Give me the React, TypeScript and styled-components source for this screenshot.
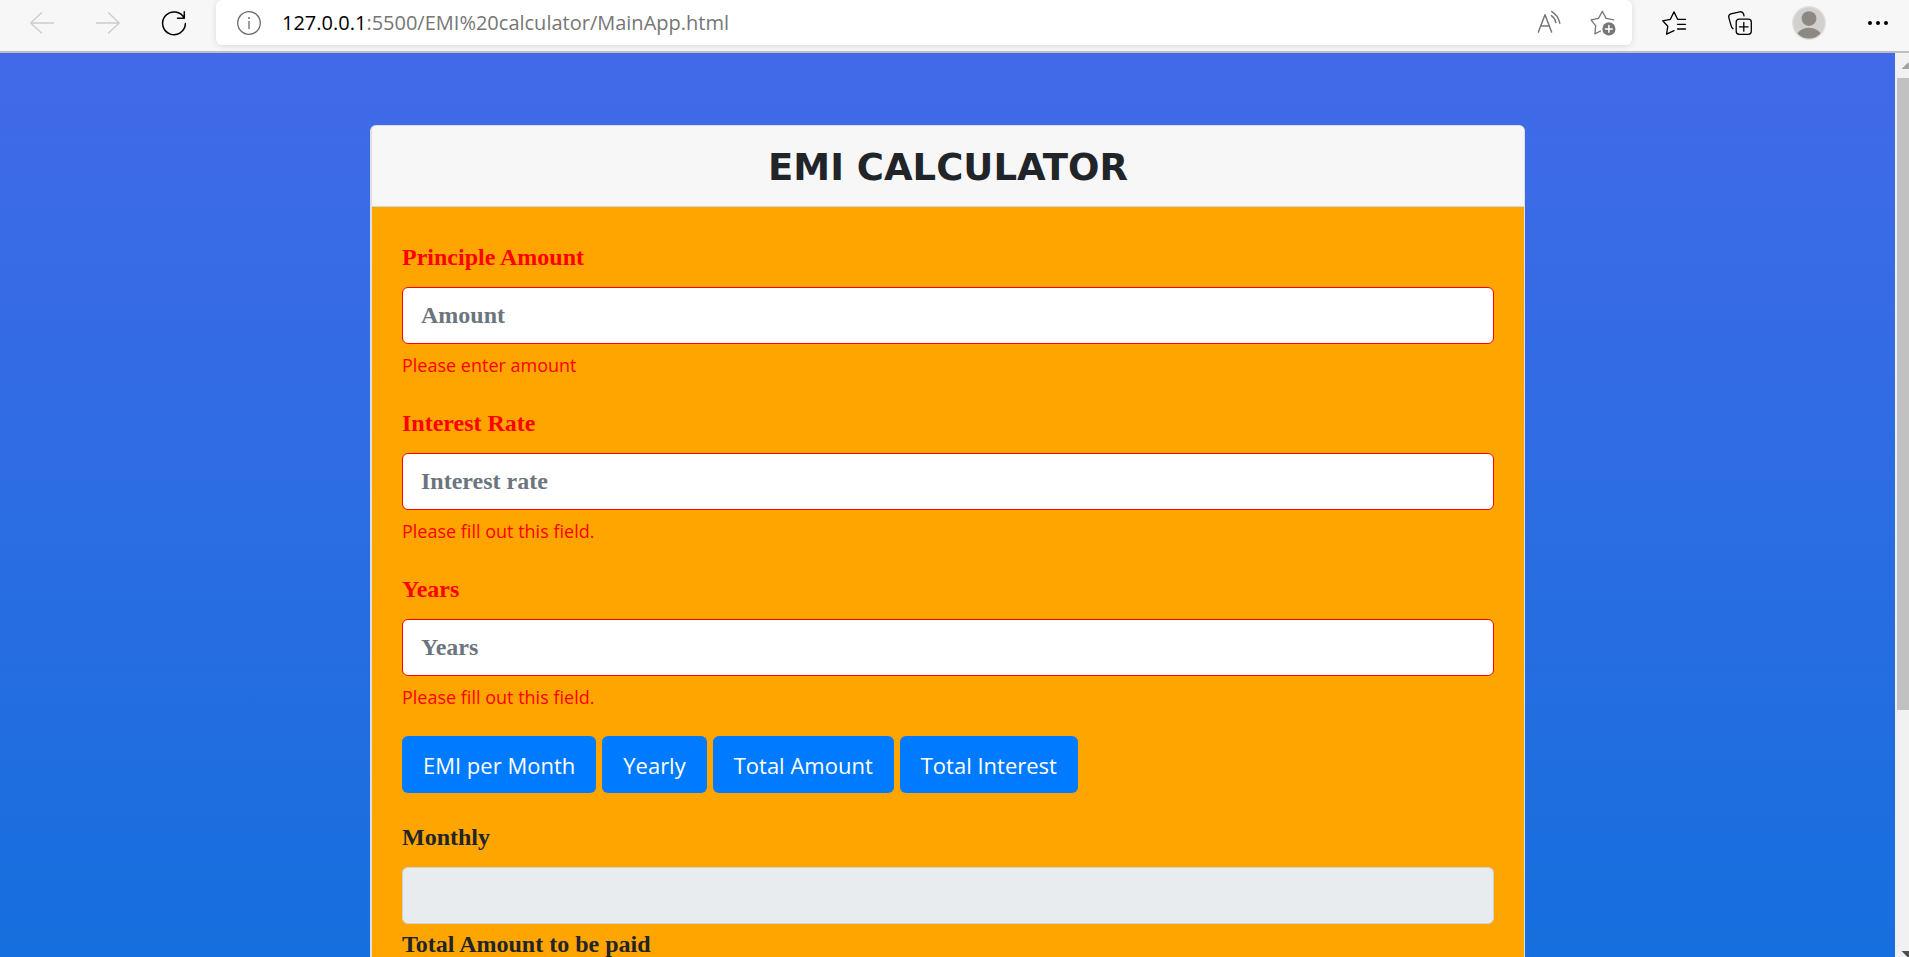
import React from 'react';
import styled, { createGlobalStyle } from 'styled-components';

const GlobalStyle = createGlobalStyle`
  *, *::before, *::after { box-sizing: border-box; }
  body {
    margin: 0;
    color: #212529;
    font-family: 'Open Sans', 'Noto Sans', sans-serif;
  }
`;

const Window = styled.div`
  display: flex;
  flex-direction: column;
  height: 100vh;
  overflow: hidden;
`;

const Toolbar = styled.header`
  display: flex;
  flex: none;
  align-items: center;
  height: 53px;
  padding: 0 19px 6px 30px;
  border-bottom: 2px solid #bdbdbd;
  background: #f7f7f7;
`;

const IconGroup = styled.div<{ $gap: number }>`
  display: flex;
  flex: none;
  align-items: center;
  gap: ${(p) => p.$gap}px;
`;

const ProfileGroup = styled(IconGroup)`
  margin-left: 40px;
`;

const IconButton = styled.button<{ $tone?: string; $size?: number }>`
  display: block;
  flex: none;
  width: ${(p) => p.$size ?? 24}px;
  height: ${(p) => p.$size ?? 24}px;
  padding: 0;
  border: 0;
  background: none;
  color: ${(p) => p.$tone ?? '#000'};

  svg {
    display: block;
    width: 100%;
    height: 100%;
    overflow: visible;
    fill: none;
    stroke: currentColor;
    stroke-width: 1.3;
    stroke-linecap: round;
    stroke-linejoin: round;
  }
`;

const AddressBar = styled.div`
  display: flex;
  flex: 1;
  align-items: center;
  gap: 21px;
  height: 45px;
  margin: 0 30px;
  padding: 0 16px 0 21px;
  border-radius: 6px;
  background: #fff;
  box-shadow: 0 1px 6px rgba(0, 0, 0, 0.12);
`;

const Url = styled.a`
  flex: 1;
  color: #767676;
  font-size: 20px;
  line-height: 28px;
  text-decoration: none;
  white-space: nowrap;
`;

const Host = styled.span`
  color: #000;
`;

const Viewport = styled.div`
  display: flex;
  flex: 1;
  min-height: 0;
`;

const Page = styled.main`
  flex: 1;
  padding: 72px 20px;
  overflow: hidden;
  background: linear-gradient(#426ae8, #166fde);
`;

const ScrollTrack = styled.div`
  display: flex;
  flex: none;
  flex-direction: column;
  width: 14px;
  padding-left: 2px;
  overflow: hidden;
  background: #f1f1f1;
`;

const ScrollArrow = styled.svg<{ $tone: string }>`
  flex: none;
  width: 24px;
  height: 25px;
  fill: ${(p) => p.$tone};
`;

const ScrollRail = styled.div`
  flex: 1;
`;

const ScrollThumb = styled.div`
  height: 74%;
  background: #c1c1c1;
`;

const Card = styled.section`
  max-width: 1155px;
  margin: 0 auto;
  border: 1px solid #dfdfdf;
  border-left-width: 2px;
  border-radius: 6px;
  background: #fff;
`;

const CardHeader = styled.div`
  padding: 18px 24px 14px;
  border-bottom: 1px solid #d6d6d6;
  border-radius: 5px 5px 0 0;
  background: #f7f7f7;
`;

const Title = styled.h1`
  margin: 0;
  font: bold 37px/48px 'DejaVu Sans', Verdana, sans-serif;
  text-align: center;
`;

const Form = styled.form`
  padding: 32px 30px;
  background: orange;
`;

const Fields = styled.div`
  display: flex;
  flex-direction: column;
  gap: 27px;
`;

const Results = styled.div`
  display: flex;
  flex-direction: column;
  gap: 2px;
`;

const Field = styled.div<{ $invalid?: boolean }>`
  color: ${(p) => (p.$invalid ? 'red' : '#212529')};
`;

const Label = styled.label`
  display: block;
  margin-bottom: 12px;
  font: bold 24px/36px 'Liberation Serif', 'Times New Roman', serif;
`;

const Input = styled.input<{ $invalid?: boolean }>`
  display: block;
  width: 100%;
  height: 57px;
  padding: 0 18px;
  border: 1px solid ${(p) => (p.$invalid ? 'red' : '#ced4da')};
  border-radius: 6px;
  background: ${(p) => (p.readOnly ? '#e9ecef' : '#fff')};
  color: #495057;
  font: bold 24px/36px 'Liberation Serif', 'Times New Roman', serif;

  &::placeholder {
    color: #6c757d;
    opacity: 1;
  }
`;

const ErrorText = styled.p`
  margin: 8px 0 0;
  font-size: 18px;
  line-height: 26px;
`;

const Actions = styled.div`
  display: flex;
  flex-wrap: wrap;
  gap: 6px;
  margin: 26px 0;
`;

const ActionButton = styled.button`
  height: 57px;
  padding: 0 21px;
  border: 0;
  border-radius: 6px;
  background: #007bff;
  color: #fff;
  font: 22px/36px 'Open Sans', 'Noto Sans', sans-serif;
`;

const inputs = [
  { id: 'amount', label: 'Principle Amount', placeholder: 'Amount', error: 'Please enter amount' },
  { id: 'rate', label: 'Interest Rate', placeholder: 'Interest rate', error: 'Please fill out this field.' },
  { id: 'years', label: 'Years', placeholder: 'Years', error: 'Please fill out this field.' },
];

const actions = ['EMI per Month', 'Yearly', 'Total Amount', 'Total Interest'];

const results = [
  { id: 'monthly', label: 'Monthly' },
  { id: 'total', label: 'Total Amount to be paid' },
];

export default function App() {
  return (
    <Window>
      <GlobalStyle />
      <Toolbar>
        <IconGroup $gap={42}>
          <IconButton $tone="#cdcdcd" aria-label="Back">
            <svg viewBox="0 0 24 24"><path d="M23.5 12H.7M11.5 1.8.7 12l10.8 10" /></svg>
          </IconButton>
          <IconButton $tone="#cdcdcd" aria-label="Forward">
            <svg viewBox="0 0 24 24"><path d="M.5 12h22.8M12.5 1.8 23.3 12 12.5 22" /></svg>
          </IconButton>
          <IconButton aria-label="Refresh">
            <svg viewBox="0 0 24 24">
              <path strokeWidth="1.5" d="M22.2 7.2A11.4 11.4 0 1 0 23.4 12.6M22.3.7v6.6h-6.8" />
            </svg>
          </IconButton>
        </IconGroup>

        <AddressBar>
          <IconButton $tone="#6b6b6b" aria-label="Site information">
            <svg viewBox="0 0 24 24">
              <circle cx="12" cy="12" r="11.3" />
              <path d="M12 10.5v7" />
              <circle cx="12" cy="7" r="1" fill="currentColor" stroke="none" />
            </svg>
          </IconButton>
          <Url href="#"><Host>127.0.0.1</Host>:5500/EMI%20calculator/MainApp.html</Url>
          <IconGroup $gap={29}>
            <IconButton $tone="#767676" aria-label="Read aloud">
              <svg viewBox="0 0 24 24">
                <path strokeWidth="1.5" d="M1.4 21 8 3.8 14.6 21M3.9 15h8.2M14.4 4.6q3.6 2.4 4.5 7M14.8.6q6.4 3.8 8 11.6" />
              </svg>
            </IconButton>
            <IconButton $tone="#767676" $size={26} aria-label="Add this page to favorites">
              <svg viewBox="0 0 26 26">
                <path d="M10.5 21 4.9 23.8 5.7 15.9 1 9.9 8.5 8.4 12.3 1.3 16.1 8.4 23.7 9.8" />
                <circle cx="18.9" cy="18.9" r="6.6" fill="currentColor" stroke="none" />
                <path d="M18.9 15.5v6.8M15.5 18.9h6.8" stroke="#fff" strokeWidth="1.5" />
              </svg>
            </IconButton>
          </IconGroup>
        </AddressBar>

        <IconGroup $gap={42}>
          <IconButton aria-label="Favorites">
            <svg viewBox="0 0 24 24">
              <path d="M12 19.6 4.6 23.2 5.8 15.2.7 9.8 8.4 8.3 12 .9 15.6 8.3H23.5M15.5 13.3h8M15.5 18h8" />
            </svg>
          </IconButton>
          <IconButton aria-label="Collections">
            <svg viewBox="0 0 24 24">
              <rect x="8.2" y="8.2" width="15.1" height="15.1" rx="3" />
              <path d="M15.8 11.4v8.8M11.4 15.8h8.8M5 17.6Q3.7 16.8 3.3 15.3L.8 6.6Q.2 3.7 2.8 2.8L11.8.8Q14.8.4 15.6 3L16 4.8" />
            </svg>
          </IconButton>
        </IconGroup>
        <ProfileGroup $gap={40}>
          <IconButton $size={34} aria-label="Profile">
            <svg viewBox="0 0 34 34">
              <clipPath id="avatar"><circle cx="17" cy="17" r="15.6" /></clipPath>
              <g stroke="none">
                <circle cx="17" cy="17" r="17" fill="#e0dfdd" />
                <circle cx="17" cy="17" r="15.6" fill="#d2d0ce" />
                <circle cx="17" cy="12.6" r="7.4" fill="#8d8883" />
                <ellipse cx="17" cy="32" rx="12.8" ry="10.2" fill="#8d8883" clipPath="url(#avatar)" />
              </g>
            </svg>
          </IconButton>
          <IconButton aria-label="Settings and more">
            <svg viewBox="0 0 24 24">
              <g fill="currentColor" stroke="none">
                <circle cx="4" cy="12" r="2" />
                <circle cx="12" cy="12" r="2" />
                <circle cx="20" cy="12" r="2" />
              </g>
            </svg>
          </IconButton>
        </ProfileGroup>
      </Toolbar>

      <Viewport>
        <Page>
          <Card>
            <CardHeader>
              <Title>EMI CALCULATOR</Title>
            </CardHeader>
            <Form onSubmit={(e) => e.preventDefault()}>
              <Fields>
                {inputs.map((f) => (
                  <Field key={f.id} $invalid>
                    <Label htmlFor={f.id}>{f.label}</Label>
                    <Input id={f.id} $invalid placeholder={f.placeholder} aria-describedby={`${f.id}-error`} />
                    <ErrorText id={`${f.id}-error`}>{f.error}</ErrorText>
                  </Field>
                ))}
              </Fields>
              <Actions>
                {actions.map((name) => (
                  <ActionButton key={name} type="button">{name}</ActionButton>
                ))}
              </Actions>
              <Results>
                {results.map((r) => (
                  <Field key={r.id}>
                    <Label htmlFor={r.id}>{r.label}</Label>
                    <Input id={r.id} readOnly />
                  </Field>
                ))}
              </Results>
            </Form>
          </Card>
        </Page>
        <ScrollTrack aria-hidden="true">
          <ScrollArrow $tone="#a3a3a3" viewBox="0 0 24 25"><path d="M4.5 16 11 9.5 17.5 16z" /></ScrollArrow>
          <ScrollRail><ScrollThumb /></ScrollRail>
          <ScrollArrow $tone="#505050" viewBox="0 0 24 25"><path d="M4.5 19 11 25.5 17.5 19z" /></ScrollArrow>
        </ScrollTrack>
      </Viewport>
    </Window>
  );
}
